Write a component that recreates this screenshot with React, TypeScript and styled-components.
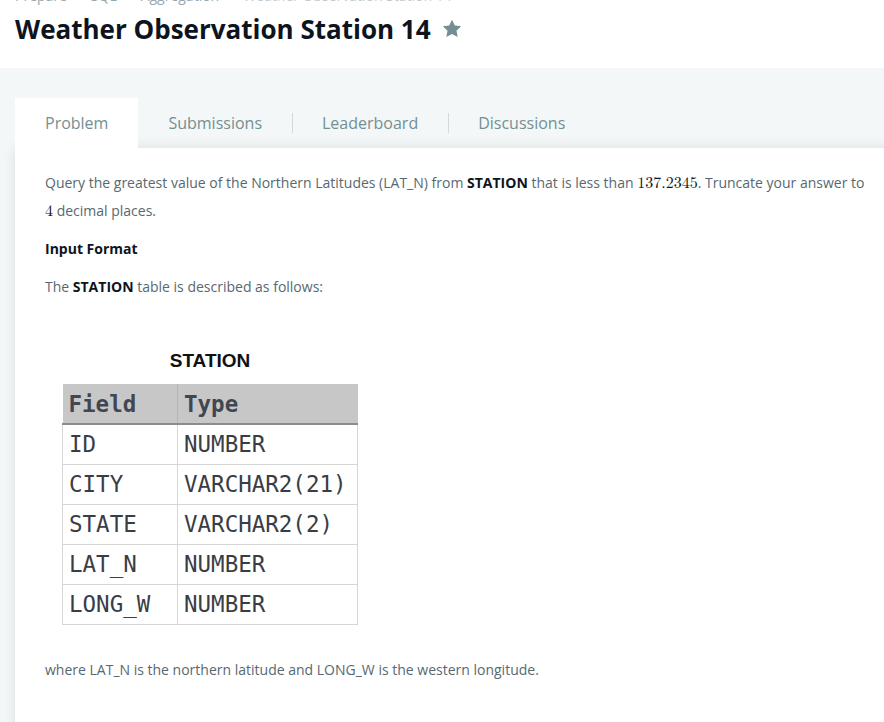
import React from "react";
import styled, { createGlobalStyle } from "styled-components";

const Global = createGlobalStyle`
  html, body { margin: 0; padding: 0; background: #f3f7f7; overflow: hidden; }
  body { font-family: "Open Sans", "Liberation Sans", sans-serif; }
  * { box-sizing: border-box; }
`;

const Page = styled.div`
  width: 884px;
  height: 722px;
  overflow: hidden;
  background: #f3f7f7;
`;

const Header = styled.header`
  background: #fff;
  height: 68px;
  padding: 0 15px;
  display: flex;
  flex-direction: column;
`;

const Crumbs = styled.nav`
  display: flex;
  align-items: center;
  gap: 10px;
  margin-top: -15px;
  height: 20px;
  font-size: 14px;
  color: #98a6ad;
`;

const CrumbSep = styled.span`
  color: #c2cacf;
  font-size: 13px;
`;

const Crumb = styled.span<{ $last?: boolean }>`
  color: ${(p) => (p.$last ? "#c2cacf" : "#98a6ad")};
`;

const TitleRow = styled.div`
  display: flex;
  align-items: center;
  gap: 10px;
  margin-top: 6px;
`;

const Title = styled.h1`
  margin: 0;
  font-size: 26px;
  font-weight: 700;
  color: #0e141e;
  line-height: 36px;
  letter-spacing: 0;
`;

const Main = styled.div`
  padding: 30px 0 0 15px;
`;

const Tabs = styled.div`
  display: flex;
  align-items: stretch;
  height: 50px;
`;

const Tab = styled.div<{ $active?: boolean; $divider?: boolean }>`
  position: relative;
  display: flex;
  align-items: center;
  padding: 0 30px;
  font-size: 16px;
  color: #738f93;
  background: ${(p) => (p.$active ? "#fff" : "transparent")};
  ${(p) =>
    p.$divider &&
    `&::before {
      content: "";
      position: absolute;
      left: 0;
      top: 15px;
      height: 20px;
      width: 1px;
      background: #d4dadc;
    }`}
`;

const Panel = styled.section`
  background: #fff;
  margin-right: -40px;
  min-height: 600px;
  padding: 21px 30px 40px 30px;
  box-shadow: 0 0 12px rgba(0, 0, 0, 0.1);
`;

const Para = styled.p`
  margin: 0;
  max-width: 826px;
  font-size: 14px;
  line-height: 28px;
  color: #576871;
`;

const Strong = styled.strong`
  color: #0e141e;
  font-weight: 700;
`;

const MathNum = styled.span`
  font-family: "Latin Modern Math", "DejaVu Serif", "Liberation Serif", serif;
  font-size: 16px;
  color: #0e141e;
`;

const Heading = styled.h3`
  margin: 10px 0 10px 0;
  font-size: 14px;
  font-weight: 700;
  line-height: 28px;
  color: #0e141e;
`;

const Figure = styled.figure`
  margin: 48px 0 0 17px;
  width: 296px;
`;

const Caption = styled.div`
  text-align: center;
  font-family: "Liberation Sans", Arial, sans-serif;
  font-weight: 700;
  font-size: 19px;
  color: #111;
  line-height: 24px;
  margin-bottom: 11px;
`;

const Table = styled.table`
  border-collapse: collapse;
  width: 296px;
  font-family: "DejaVu Sans Mono", "Liberation Mono", monospace;
  font-size: 22.5px;
  color: #3a3d45;
`;

const Th = styled.th`
  background: #c7c7c7;
  text-align: left;
  font-weight: 700;
  height: 40px;
  padding: 0 6px;
  color: #414650;
  border-left: 1px solid #b5b5b5;
  border-bottom: 2px solid #8c8c8c;
  &:first-child { border-left: none; }
`;

const Td = styled.td<{ $first?: boolean }>`
  height: 40px;
  padding: 0 6px;
  border: 1px solid #d6d6d6;
  width: ${(p) => (p.$first ? "115px" : "auto")};
`;

const Bottom = styled(Para)`
  margin-top: 31px;
`;

const Star = () => (
  <svg width="22" height="22" viewBox="0 0 24 24">
    <path
      d="M12 1.8l3.05 6.35 6.95.9-5.1 4.8 1.3 6.9L12 17.4l-6.2 3.35 1.3-6.9-5.1-4.8 6.95-.9z"
      fill="#738f93"
    />
  </svg>
);

const rows: [string, string][] = [
  ["ID", "NUMBER"],
  ["CITY", "VARCHAR2(21)"],
  ["STATE", "VARCHAR2(2)"],
  ["LAT_N", "NUMBER"],
  ["LONG_W", "NUMBER"],
];

export default function App() {
  return (
    <Page>
      <Global />
      <Header>
        <Crumbs>
          <Crumb>Prepare</Crumb>
          <CrumbSep>›</CrumbSep>
          <Crumb>SQL</Crumb>
          <CrumbSep>›</CrumbSep>
          <Crumb>Aggregation</Crumb>
          <CrumbSep>›</CrumbSep>
          <Crumb $last>Weather Observation Station 14</Crumb>
        </Crumbs>
        <TitleRow>
          <Title>Weather Observation Station 14</Title>
          <Star />
        </TitleRow>
      </Header>
      <Main>
        <Tabs>
          <Tab $active>Problem</Tab>
          <Tab>Submissions</Tab>
          <Tab $divider>Leaderboard</Tab>
          <Tab $divider>Discussions</Tab>
        </Tabs>
        <Panel>
          <Para>
            Query the greatest value of the Northern Latitudes (LAT_N) from <Strong>STATION</Strong> that is
            less than <MathNum>137.2345</MathNum>. Truncate your answer to <MathNum>4</MathNum> decimal places.
          </Para>
          <Heading>Input Format</Heading>
          <Para>
            The <Strong>STATION</Strong> table is described as follows:
          </Para>
          <Figure>
            <Caption>STATION</Caption>
            <Table>
              <thead>
                <tr>
                  <Th>Field</Th>
                  <Th>Type</Th>
                </tr>
              </thead>
              <tbody>
                {rows.map(([f, t]) => (
                  <tr key={f}>
                    <Td $first>{f}</Td>
                    <Td>{t}</Td>
                  </tr>
                ))}
              </tbody>
            </Table>
          </Figure>
          <Bottom>where LAT_N is the northern latitude and LONG_W is the western longitude.</Bottom>
        </Panel>
      </Main>
    </Page>
  );
}
